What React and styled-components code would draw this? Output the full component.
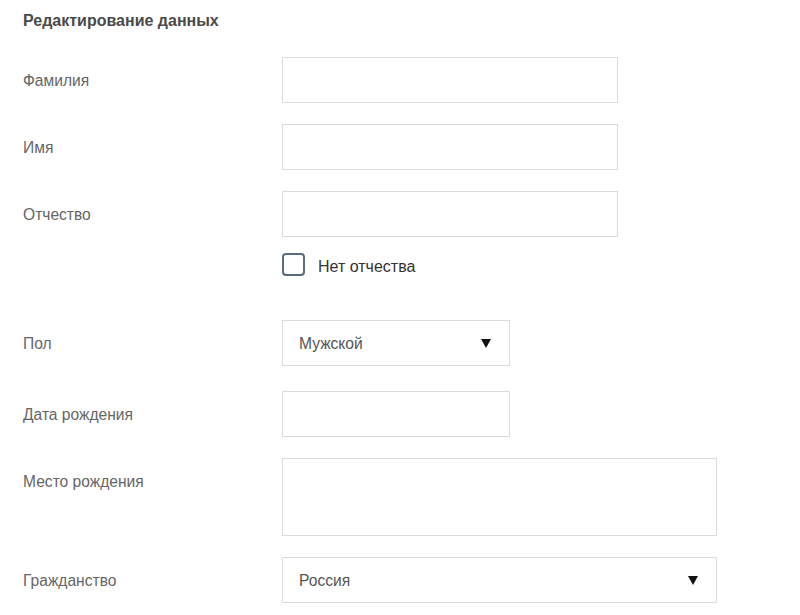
import React from "react";
import styled, { createGlobalStyle } from "styled-components";

const Global = createGlobalStyle`
  html, body { margin: 0; padding: 0; background: #fff; }
  body { font-family: "Liberation Sans", Arial, sans-serif; }
  * { box-sizing: border-box; }
`;

const Page = styled.div`
  padding: 11px 0 0 23px;
  width: 800px;
`;

const Title = styled.h2`
  margin: 0;
  font-size: 16px;
  font-weight: bold;
  color: #4a4a4a;
  line-height: 20px;
  height: 46px;
`;

const Form = styled.div`
  display: flex;
  flex-direction: column;
`;

const Row = styled.div`
  display: flex;
  align-items: flex-start;
  margin-top: ${(p) => p.$gap || 0}px;
`;

const Label = styled.div`
  width: 259px;
  flex: none;
  height: 46px;
  line-height: 46px;
  padding-top: 1px;
  font-size: 15.6px;
  color: #666;
`;

const Field = styled.div`
  width: ${(p) => p.$w}px;
  height: ${(p) => p.$h || 46}px;
  border: 1px solid #dcdcdc;
  background: #fff;
  display: flex;
  align-items: center;
  justify-content: space-between;
  padding: 1px 18px 0 16px;
  font-size: 15.6px;
  color: #555;
`;

const Arrow = styled.span`
  width: 0;
  height: 0;
  border-left: 5px solid transparent;
  border-right: 5px solid transparent;
  border-top: 9px solid #111;
`;

const CheckRow = styled.label`
  display: flex;
  align-items: center;
  gap: 13px;
  margin-left: 259px;
  margin-top: 16px;
  font-size: 16px;
  color: #333;
  height: 23px;
  padding-top: 4px;
`;

const Box = styled.span`
  width: 23px;
  height: 23px;
  border: 2px solid #5b6b7b;
  border-radius: 4px;
  flex: none;
  margin-top: -4px;
`;

export default function App() {
  return (
    <Page>
      <Global />
      <Title>Редактирование данных</Title>
      <Form>
        <Row>
          <Label>Фамилия</Label>
          <Field $w={336} />
        </Row>
        <Row $gap={21}>
          <Label>Имя</Label>
          <Field $w={336} />
        </Row>
        <Row $gap={21}>
          <Label>Отчество</Label>
          <Field $w={336} />
        </Row>
        <CheckRow>
          <Box />
          Нет отчества
        </CheckRow>
        <Row $gap={44}>
          <Label>Пол</Label>
          <Field $w={228}>
            Мужской
            <Arrow />
          </Field>
        </Row>
        <Row $gap={25}>
          <Label>Дата рождения</Label>
          <Field $w={228} />
        </Row>
        <Row $gap={21}>
          <Label>Место рождения</Label>
          <Field $w={435} $h={78} />
        </Row>
        <Row $gap={21}>
          <Label>Гражданство</Label>
          <Field $w={435}>
            Россия
            <Arrow />
          </Field>
        </Row>
      </Form>
    </Page>
  );
}
